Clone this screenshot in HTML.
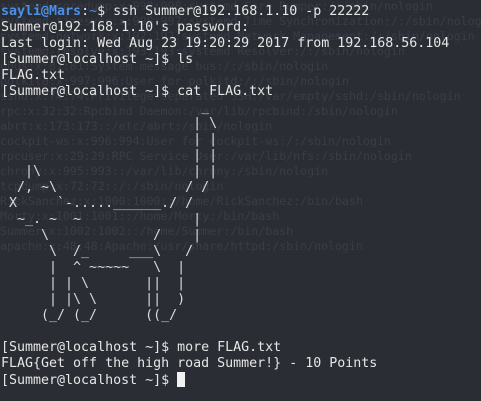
<!DOCTYPE html>
<html><head><meta charset="utf-8"><style>
html,body{margin:0;padding:0;width:481px;height:401px;overflow:hidden;background:#2b2d35;}
.bg{position:absolute;left:0;top:-1px;font-family:"DejaVu Sans Mono","Liberation Mono",monospace;font-size:11.6px;line-height:15px;color:#3a3d46;white-space:pre;margin:0;}
.fg{position:absolute;left:1px;top:4px;font-family:"DejaVu Sans Mono","Liberation Mono",monospace;font-size:13.3px;line-height:16px;color:#e6e6e6;white-space:pre;margin:0;}
.b{color:#4a90e8;font-weight:bold}
.t{color:#4a90e8}
.art{color:#d6dce6}
.cur{display:inline-block;width:8px;height:15px;background:#f2f2f2;vertical-align:-3px;}
</style></head><body>
<pre class="bg">systemd-coredump:x:999:998:systemd Core Dumper:/:/sbin/nologin
systemd-timesync:x:998:997:systemd Time Synchronization:/:/sbin/nologin
systemd-network:x:192:192:systemd Network Management:/:/sbin/nologin
systemd-resolve:x:193:193:systemd Resolver:/:/sbin/nologin
dbus:x:81:81:System message bus:/:/sbin/nologin
polkitd:x:997:996:User for polkitd:/:/sbin/nologin
sshd:x:74:74:Privilege-separated SSH:/var/empty/sshd:/sbin/nologin
rpc:x:32:32:Rpcbind Daemon:/var/lib/rpcbind:/sbin/nologin
abrt:x:173:173::/etc/abrt:/sbin/nologin
cockpit-ws:x:996:994:User for cockpit-ws:/:/sbin/nologin
rpcuser:x:29:29:RPC Service User:/var/lib/nfs:/sbin/nologin
chrony:x:995:993::/var/lib/chrony:/sbin/nologin
tcpdump:x:72:72::/:/sbin/nologin
RickSanchez:x:1000:1000::/home/RickSanchez:/bin/bash
Morty:x:1001:1001::/home/Morty:/bin/bash
Summer:x:1002:1002::/home/Summer:/bin/bash
apache:x:48:48:Apache:/usr/share/httpd:/sbin/nologin</pre>
<pre class="fg"><span class="b">sayli@Mars</span>:<span class="t">~</span>$ ssh Summer@192.168.1.10 -p 22222
Summer@192.168.1.10's password:
Last login: Wed Aug 23 19:20:29 2017 from 192.168.56.104
[Summer@localhost ~]$ ls
FLAG.txt
[Summer@localhost ~]$ cat FLAG.txt
<span class="art">                         _
                        | \
                        | |
                        | |
   |\                   | |
  /, ~\                / /
 X     `-.....______./ /
  ~_. ~  ~              |
     \             /    |
      \  /_     ___\   /
      |  ^ ~~~~~   \  |
      | | \       ||  |
      | |\ \      ||  )
     (_/ (_/      ((_/</span>

[Summer@localhost ~]$ more FLAG.txt
FLAG{Get off the high road Summer!} - 10 Points
[Summer@localhost ~]$ <span class="cur"></span></pre>
</body></html>
